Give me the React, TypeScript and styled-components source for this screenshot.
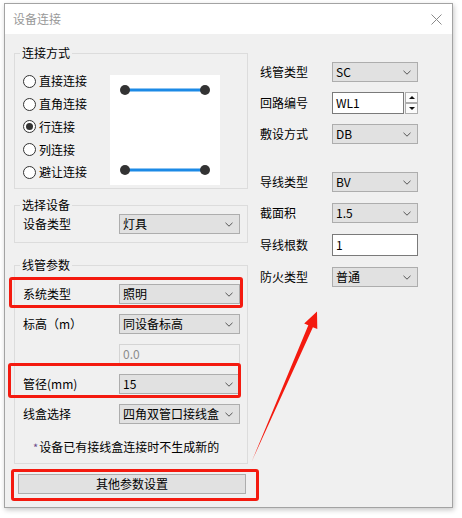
import React from 'react';
import styled, { createGlobalStyle } from 'styled-components';

const GlobalStyle = createGlobalStyle`
  html, body { margin: 0; padding: 0; background: #fff; }
  body {
    font-family: "Noto Sans CJK SC", "Noto Sans", sans-serif;
    font-size: 12px;
    color: #000;
  }
  * { box-sizing: border-box; }
`;

const Page = styled.div`
  position: relative;
  width: 462px;
  height: 518px;
  padding: 3px 0 0 4px;
`;

const Dialog = styled.div`
  width: 449px;
  height: 505px;
  border: 1px solid #a3a3a3;
  box-shadow: 1px 2px 5px rgba(0, 0, 0, 0.22);
  display: flex;
  flex-direction: column;
  background: #f0f0f0;
`;

const TitleBar = styled.div`
  height: 30px;
  flex: none;
  background: #fff;
  display: flex;
  align-items: center;
  justify-content: space-between;
  padding: 0 10px 0 8px;
  color: #999;
  font-size: 12px;
  line-height: 16px;
`;

const CloseIcon = styled.svg`
  width: 11px;
  height: 11px;
  display: block;
`;

const Body = styled.div`
  flex: 1;
  display: grid;
  grid-template-columns: 234px 158px;
  column-gap: 12px;
  align-items: start;
  padding: 11px 0 0 9px;
`;

const LeftCol = styled.div`
  display: flex;
  flex-direction: column;
`;

const GroupBox = styled.fieldset<{ $mt: number }>`
  margin: ${(p) => p.$mt}px 0 0;
  padding: 0;
  border: 1px solid #dcdcdc;
  min-width: 0;
`;

const Legend = styled.legend`
  margin-left: 5px;
  padding: 0 2px;
  line-height: 16px;
  font-size: 12px;
`;

const RadioGrid = styled.div`
  display: grid;
  grid-template-columns: 87px 110px;
  align-items: start;
  padding: 9px 0 3px 8px;
`;

const RadioList = styled.div`
  display: flex;
  flex-direction: column;
`;

const RadioRow = styled.label`
  height: 22.75px;
  display: flex;
  align-items: center;
  gap: 3px;
  line-height: 16px;
`;

const RadioCircle = styled.span<{ $checked?: boolean }>`
  width: 13px;
  height: 13px;
  border-radius: 50%;
  border: 1px solid #333;
  background: #fff;
  display: flex;
  align-items: center;
  justify-content: center;
  flex: none;
  &::after {
    content: '';
    width: 7px;
    height: 7px;
    border-radius: 50%;
    background: #333;
    display: ${(p) => (p.$checked ? 'block' : 'none')};
  }
`;

const Preview = styled.div`
  width: 110px;
  height: 110px;
  margin-top: 5px;
  background: #fff;
`;

const PreviewSvg = styled.svg`
  display: block;
`;

const GroupContent = styled.div<{ $pad: string; $gap?: number }>`
  padding: ${(p) => p.$pad};
  display: flex;
  flex-direction: column;
  gap: ${(p) => p.$gap ?? 0}px;
`;

const FormRow = styled.div`
  position: relative;
  display: grid;
  grid-template-columns: 96px 121px;
  align-items: center;
  height: 20px;
  line-height: 16px;
`;

const Highlight = styled.span<{ $t: number; $l: number; $r: number; $b: number }>`
  position: absolute;
  top: ${(p) => p.$t}px;
  left: ${(p) => p.$l}px;
  right: ${(p) => p.$r}px;
  bottom: ${(p) => p.$b}px;
  border: 3px solid #f41a0f;
  border-radius: 3px;
  pointer-events: none;
`;

const Select = styled.div<{ $h?: number }>`
  height: ${(p) => p.$h ?? 20}px;
  border: 1px solid #adadad;
  background: #e1e1e1;
  display: flex;
  align-items: center;
  justify-content: space-between;
  padding: 0 6px 0 3px;
  line-height: 16px;
  white-space: nowrap;
  overflow: hidden;
`;

const Chevron = styled.svg`
  width: 8px;
  height: 5px;
  flex: none;
  display: block;
  margin-top: 1px;
`;

const TextInput = styled.div<{ $disabled?: boolean }>`
  height: ${(p) => (p.$disabled ? 20 : 22)}px;
  border: 1px solid ${(p) => (p.$disabled ? '#d4d4d4' : '#7a7a7a')};
  background: ${(p) => (p.$disabled ? '#f0f0f0' : '#fff')};
  color: ${(p) => (p.$disabled ? '#8c8c8c' : '#000')};
  display: flex;
  align-items: center;
  padding-left: 3px;
  line-height: 16px;
`;

const EmptyCell = styled.span``;

const Note = styled.div`
  margin: 5px 0 0 10px;
  line-height: 16px;
`;

const Star = styled.span`
  color: #6a4a8a;
  font-size: 11px;
  margin-right: 1px;
`;

const ButtonWrap = styled.div`
  position: relative;
  margin: 10px 0 0 4px;
  width: 228px;
`;

const Button = styled.div`
  height: 20px;
  border: 1px solid #adadad;
  background: #e1e1e1;
  display: flex;
  align-items: center;
  justify-content: center;
  line-height: 16px;
`;

const RightCol = styled.div`
  padding-top: 17px;
  display: flex;
  flex-direction: column;
  gap: 28px;
`;

const RightSection = styled.div<{ $gap: number }>`
  display: flex;
  flex-direction: column;
  gap: ${(p) => p.$gap}px;
`;

const RightRow = styled.div`
  display: grid;
  grid-template-columns: 72px 86px;
  align-items: center;
  line-height: 16px;
`;

const SpinBox = styled.div`
  display: flex;
  gap: 1px;
`;

const SpinInput = styled(TextInput)`
  width: 72px;
`;

const SpinButtons = styled.div`
  display: flex;
  flex-direction: column;
  width: 13px;
`;

const SpinButton = styled.div<{ $down?: boolean }>`
  height: 11px;
  border: 1px solid #adadad;
  background: #fbfbfb;
  display: flex;
  align-items: center;
  justify-content: center;
  &::after {
    content: '';
    width: 0;
    height: 0;
    border-left: 3px solid transparent;
    border-right: 3px solid transparent;
    ${(p) => (p.$down ? 'border-top: 3px solid #111;' : 'border-bottom: 3px solid #111;')}
  }
`;

const ArrowOverlay = styled.svg`
  position: absolute;
  top: 0;
  left: 0;
  pointer-events: none;
`;

const ChevronIcon = () => (
  <Chevron viewBox="0 0 8 5">
    <path d="M0.5 0.8 L4 4.2 L7.5 0.8" fill="none" stroke="#555" strokeWidth="1" />
  </Chevron>
);

const Dropdown = ({ value }: { value: string }) => (
  <Select>
    <span>{value}</span>
    <ChevronIcon />
  </Select>
);

const radios = ['直接连接', '直角连接', '行连接', '列连接', '避让连接'];

export default function App() {
  return (
    <>
      <GlobalStyle />
      <Page>
        <Dialog>
          <TitleBar>
            <span>设备连接</span>
            <CloseIcon viewBox="0 0 11 11">
              <path d="M0.5 0.5 L10.5 10.5 M10.5 0.5 L0.5 10.5" stroke="#8a8a8a" strokeWidth="1" />
            </CloseIcon>
          </TitleBar>
          <Body>
            <LeftCol>
              <GroupBox $mt={0}>
                <Legend>连接方式</Legend>
                <RadioGrid>
                  <RadioList>
                    {radios.map((r) => (
                      <RadioRow key={r}>
                        <RadioCircle $checked={r === '行连接'} />
                        <span>{r}</span>
                      </RadioRow>
                    ))}
                  </RadioList>
                  <Preview>
                    <PreviewSvg width="110" height="110" viewBox="0 0 110 110">
                      <line x1="15" y1="15" x2="95" y2="15" stroke="#1c8ae6" strokeWidth="3" />
                      <line x1="15" y1="95" x2="95" y2="95" stroke="#1c8ae6" strokeWidth="3" />
                      <circle cx="15" cy="15" r="5" fill="#333" />
                      <circle cx="95" cy="15" r="5" fill="#333" />
                      <circle cx="15" cy="95" r="5" fill="#333" />
                      <circle cx="95" cy="95" r="5" fill="#333" />
                    </PreviewSvg>
                  </Preview>
                </RadioGrid>
              </GroupBox>

              <GroupBox $mt={8}>
                <Legend>选择设备</Legend>
                <GroupContent $pad="1px 7px 8px 8px">
                  <FormRow>
                    <span>设备类型</span>
                    <Dropdown value="灯具" />
                  </FormRow>
                </GroupContent>
              </GroupBox>

              <GroupBox $mt={14}>
                <Legend>线管参数</Legend>
                <GroupContent $pad="11px 7px 8px 8px" $gap={10}>
                  <FormRow>
                    <span>系统类型</span>
                    <Dropdown value="照明" />
                    <Highlight $t={-7} $l={-14} $r={-3} $b={-4} />
                  </FormRow>
                  <FormRow>
                    <span>标高（m）</span>
                    <Dropdown value="同设备标高" />
                  </FormRow>
                  <FormRow>
                    <EmptyCell />
                    <TextInput $disabled>0.0</TextInput>
                  </FormRow>
                  <FormRow>
                    <span>管径(mm)</span>
                    <Dropdown value="15" />
                    <Highlight $t={-11} $l={-15} $r={-1} $b={-4} />
                  </FormRow>
                  <FormRow>
                    <span>线盒选择</span>
                    <Dropdown value="四角双管口接线盒" />
                  </FormRow>
                  <Note>
                    <Star>*</Star>设备已有接线盒连接时不生成新的
                  </Note>
                </GroupContent>
              </GroupBox>

              <ButtonWrap>
                <Button>其他参数设置</Button>
                <Highlight $t={-5} $l={-7} $r={-13} $b={-7} />
              </ButtonWrap>
            </LeftCol>

            <RightCol>
              <RightSection $gap={10}>
                <RightRow>
                  <span>线管类型</span>
                  <Dropdown value="SC" />
                </RightRow>
                <RightRow>
                  <span>回路编号</span>
                  <SpinBox>
                    <SpinInput>WL1</SpinInput>
                    <SpinButtons>
                      <SpinButton />
                      <SpinButton $down />
                    </SpinButtons>
                  </SpinBox>
                </RightRow>
                <RightRow>
                  <span>敷设方式</span>
                  <Dropdown value="DB" />
                </RightRow>
              </RightSection>
              <RightSection $gap={11}>
                <RightRow>
                  <span>导线类型</span>
                  <Dropdown value="BV" />
                </RightRow>
                <RightRow>
                  <span>截面积</span>
                  <Dropdown value="1.5" />
                </RightRow>
                <RightRow>
                  <span>导线根数</span>
                  <TextInput>1</TextInput>
                </RightRow>
                <RightRow>
                  <span>防火类型</span>
                  <Dropdown value="普通" />
                </RightRow>
              </RightSection>
            </RightCol>
          </Body>
        </Dialog>
        <ArrowOverlay width="462" height="518" viewBox="0 0 462 518">
          <polygon
            points="251.5,462 308.3,325.2 304.2,323.4 317,311.5 317.3,329 312.9,327.2"
            fill="#f41a0f"
          />
        </ArrowOverlay>
      </Page>
    </>
  );
}
